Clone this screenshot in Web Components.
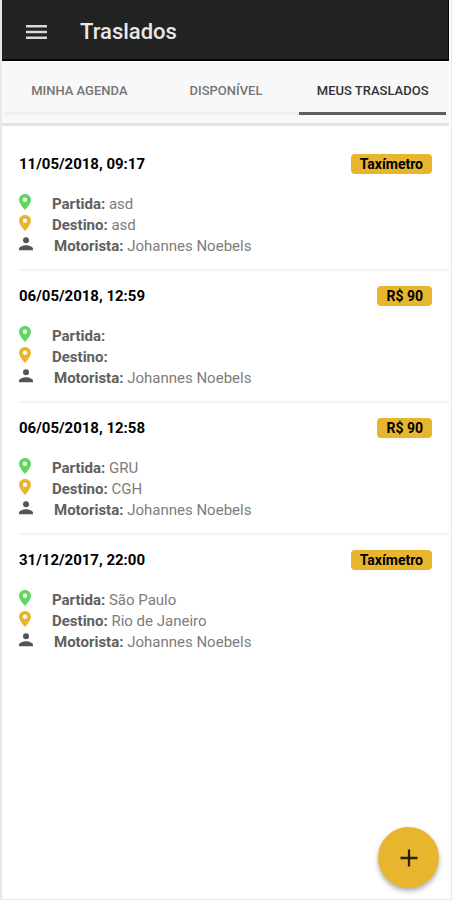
<!DOCTYPE html>
<html lang="pt-BR">
<head>
<meta charset="utf-8">
<meta name="viewport" content="width=device-width, initial-scale=1">
<title>Traslados</title>
<style>
  html, body { margin: 0; }
  body { font-family: Roboto, "Liberation Sans", sans-serif; background: #fff; color: #000; }
</style>
</head>
<body>
<app-screen>
  <app-bar slot="header">Traslados</app-bar>
  <tab-bar slot="header">
    <tab-link href="#agenda">MINHA AGENDA</tab-link>
    <tab-link href="#disponivel">DISPONÍVEL</tab-link>
    <tab-link href="#meus" active>MEUS TRASLADOS</tab-link>
  </tab-bar>
  <transfer-item date="11/05/2018, 09:17" price="Taxímetro" from="asd" to="asd" driver="Johannes Noebels"></transfer-item>
  <transfer-item date="06/05/2018, 12:59" price="R$ 90" from="" to="" driver="Johannes Noebels"></transfer-item>
  <transfer-item date="06/05/2018, 12:58" price="R$ 90" from="GRU" to="CGH" driver="Johannes Noebels"></transfer-item>
  <transfer-item date="31/12/2017, 22:00" price="Taxímetro" from="São Paulo" to="Rio de Janeiro" driver="Johannes Noebels"></transfer-item>
  <add-button slot="action"></add-button>
</app-screen>
<script>
const define = (name, html, setup) => {
  const template = document.createElement('template');
  template.innerHTML = html;
  customElements.define(name, class extends HTMLElement {
    constructor() {
      super();
      this.attachShadow({ mode: 'open' }).append(template.content.cloneNode(true));
    }
    connectedCallback() { if (setup) setup(this, this.shadowRoot); }
  });
};

define('app-screen', `
  <style>
    :host { display: flex; flex-direction: column; box-sizing: border-box; min-height: 100vh;
      border: solid #e9e9e9; border-width: 0 1px 1px 2px; padding-right: 2px; }
    main { flex: 1; padding: 13px 0 0 17px; }
  </style>
  <header><slot name="header"></slot></header>
  <main><slot></slot></main>
  <slot name="action"></slot>`);

define('app-bar', `
  <style>
    :host { display: flex; align-items: center; gap: 33px; box-sizing: border-box; height: 61px;
      padding: 4px 24px 0; background: #222; border: solid #050505; border-width: 0 1px 2px 0; color: #e8e8e8; }
    button { display: flex; padding: 0; border: 0; background: none; color: inherit; cursor: pointer; }
    h1 { margin: 0; font-size: 22px; line-height: 28px; font-weight: 500; }
  </style>
  <button type="button" aria-label="Menu">
    <svg width="21" height="16" viewBox="0 0 21 16" fill="#d8d8d8" aria-hidden="true">
      <path d="M0 1h21v2.400H0zM0 6.800h21v2.400H0zM0 12.600h21V15H0z"/>
    </svg>
  </button>
  <h1><slot></slot></h1>`);

define('tab-bar', `
  <style>
    :host { display: block; padding: 0 3px 8px 4px; background: #f8f8f8; border-bottom: 3px solid #e4e4e4; }
    nav { display: grid; grid-template-columns: repeat(3, 1fr); }
  </style>
  <nav aria-label="Seções"><slot></slot></nav>`);

define('tab-link', `
  <style>
    :host { display: block; }
    a { display: flex; align-items: center; justify-content: center; box-sizing: border-box; height: 54px;
      padding-top: 9px; border-bottom: 3px solid #efefef; color: #757575; font-size: 13px; line-height: 16px;
      font-weight: 500; white-space: nowrap; text-decoration: none; }
    :host([active]) a { border-color: #5b605b; color: #333; }
  </style>
  <a><slot></slot></a>`, (host, root) => {
    const a = root.querySelector('a');
    a.href = host.getAttribute('href');
    if (host.hasAttribute('active')) a.setAttribute('aria-current', 'page');
  });

define('pin-icon', `
  <style>:host { display: block; } svg { display: block; }</style>
  <svg width="12" height="16" viewBox="0 0 12 16" aria-hidden="true">
    <path fill="currentColor" fill-rule="evenodd" d="M6 0C2.700 0 0 2.600 0 5.800 0 10 6 16 6 16s6-6 6-10.200C12 2.600 9.300 0 6 0zm0 3.600a2.200 2.200 0 1 1 0 4.400 2.200 2.200 0 0 1 0-4.400z"/>
  </svg>`);

define('person-icon', `
  <style>:host { display: block; } svg { display: block; }</style>
  <svg width="14" height="14" viewBox="0 0 14 14" fill="currentColor" aria-hidden="true">
    <circle cx="7" cy="3.300" r="3"/>
    <path d="M0 13.300v-1.500C0 9.500 4.600 8.300 7 8.300s7 1.200 7 3.500v1.500z"/>
  </svg>`);

define('transfer-item', `
  <style>
    :host { display: block; padding: 15px 0 12px; border-bottom: 2px solid #f4f4f4; }
    :host(:last-of-type) { border-bottom: 0; }
    header { display: flex; align-items: center; justify-content: space-between; padding-right: 17px; margin-bottom: 20px; }
    h2 { margin: 0; font-size: 15px; line-height: 20px; font-weight: 700; }
    .price { padding: 0 9px; border-radius: 4px; background: #e8b52e; font-size: 14px; line-height: 20px; font-weight: 700; }
    ul { margin: 0; padding: 0; list-style: none; }
    li { display: flex; align-items: flex-start; gap: 21px; font-size: 15px; line-height: 21px; color: #7c7c7c; }
    b { font-weight: 700; color: #606060; }
    .from { color: #5fd860; }
    .to { color: #e8b52e; }
    person-icon { margin-top: 1px; color: #555; }
  </style>
  <article>
    <header><h2></h2><span class="price"></span></header>
    <ul>
      <li><pin-icon class="from"></pin-icon><span><b>Partida:</b> <span data-k="from"></span></span></li>
      <li><pin-icon class="to"></pin-icon><span><b>Destino:</b> <span data-k="to"></span></span></li>
      <li><person-icon></person-icon><span><b>Motorista:</b> <span data-k="driver"></span></span></li>
    </ul>
  </article>`, (host, root) => {
    root.querySelector('h2').textContent = host.getAttribute('date');
    root.querySelector('.price').textContent = host.getAttribute('price');
    root.querySelectorAll('[data-k]').forEach(el => { el.textContent = host.getAttribute(el.dataset.k); });
  });

define('add-button', `
  <style>
    :host { position: fixed; right: 13px; bottom: 12px; }
    button { display: grid; place-items: center; width: 61px; height: 61px; padding: 0; border: 0;
      border-radius: 50%; background: #e8b52e; box-shadow: 0 3px 5px rgba(0,0,0,.32); cursor: pointer; }
  </style>
  <button type="button" aria-label="Adicionar traslado">
    <svg width="18" height="18" viewBox="0 0 18 18" fill="none" stroke="#2a2108" stroke-width="2.300" aria-hidden="true">
      <path d="M9 .5v17M.5 9h17"/>
    </svg>
  </button>`);
</script>
</body>
</html>
